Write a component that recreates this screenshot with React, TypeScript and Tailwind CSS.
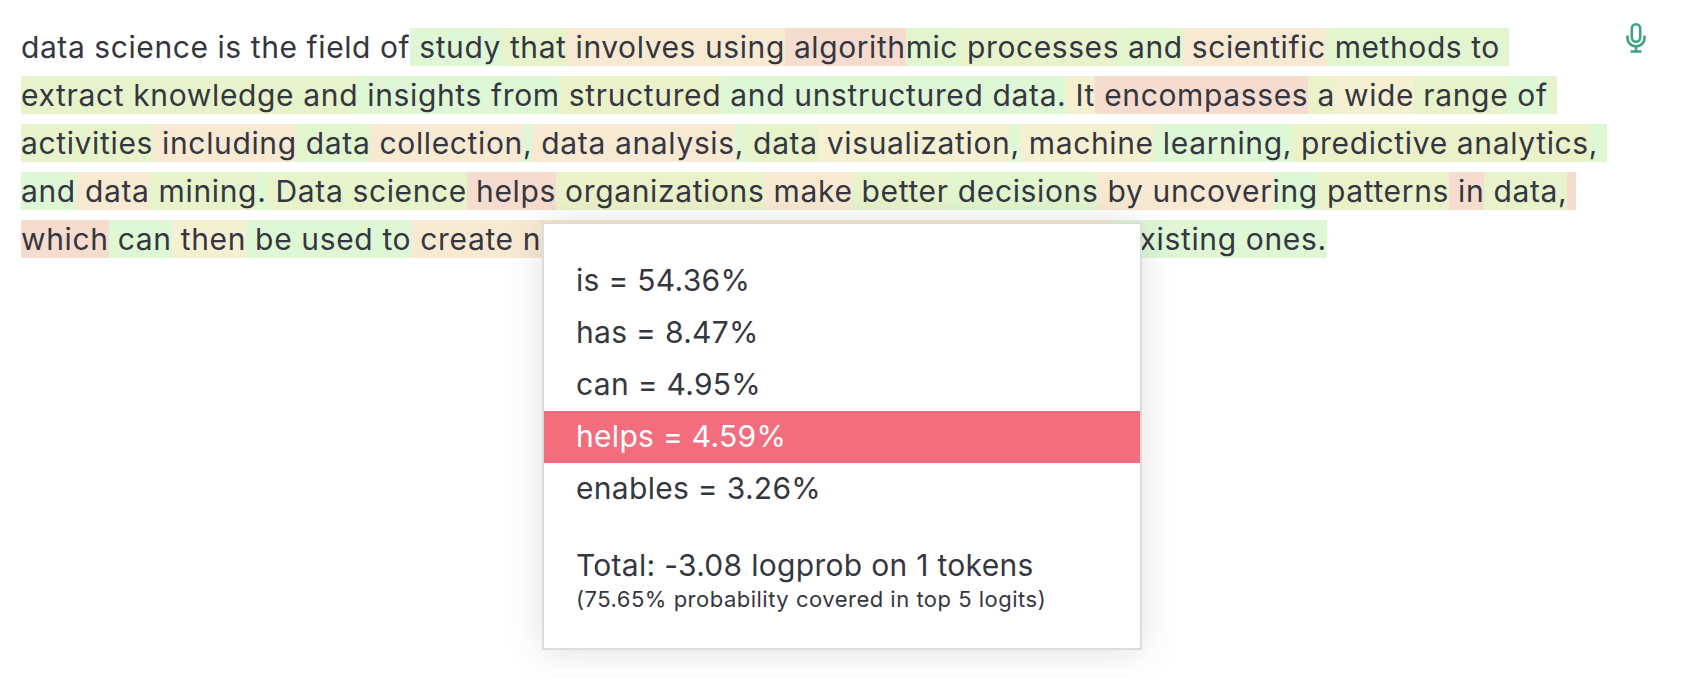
const GREEN = "bg-[#def7d5]";
const LIME = "bg-[#e1f5ce]";
const OLIVE = "bg-[#e6f3cb]";
const KHAKI = "bg-[#ebf2ca]";
const YELLOW = "bg-[#f6f0d2]";
const ORANGE = "bg-[#f8e9d2]";
const RED = "bg-[#f6dccf]";

const lines: [string, string][][] = [
  [
    ["data science is the field of", ""],
    [" study", GREEN],
    [" that", OLIVE],
    [" involves using", ORANGE],
    [" algorith", RED],
    ["mic", LIME],
    [" processes", OLIVE],
    [" and", LIME],
    [" scientific", ORANGE],
    [" methods to ", LIME],
  ],
  [
    ["extract knowledge and", OLIVE],
    [" insights from", GREEN],
    [" structured", KHAKI],
    [" and unstructured data.", GREEN],
    [" It", YELLOW],
    [" encompasses", RED],
    [" a", KHAKI],
    [" wide", YELLOW],
    [" range", OLIVE],
    [" of", GREEN],
    [" ", OLIVE],
  ],
  [
    ["activities", OLIVE],
    [" including", ORANGE],
    [" data", LIME],
    [" collection", ORANGE],
    [",", GREEN],
    [" data analysis", ORANGE],
    [",", GREEN],
    [" data", OLIVE],
    [" visualization", YELLOW],
    [",", GREEN],
    [" machine", YELLOW],
    [" learning,", GREEN],
    [" predictive analytics", KHAKI],
    [", ", GREEN],
  ],
  [
    ["and", GREEN],
    [" data", ORANGE],
    [" mining", OLIVE],
    [".", GREEN],
    [" Data science", OLIVE],
    [" helps", RED],
    [" organizations", KHAKI],
    [" make", ORANGE],
    [" better", OLIVE],
    [" decisions", LIME],
    [" by uncover", ORANGE],
    ["ing", GREEN],
    [" patterns", KHAKI],
    [" in", RED],
    [" data,", OLIVE],
    [" ", RED],
  ],
  [
    ["which", RED],
    [" can", GREEN],
    [" then", YELLOW],
    [" be used to", GREEN],
    [" create new products and services and improve", ORANGE],
    [" existing ones.", GREEN],
  ],
];

const logits = ["is = 54.36%", "has = 8.47%", "can = 4.95%", "helps = 4.59%", "enables = 3.26%"];

function MicIcon() {
  return (
    <svg viewBox="0 0 20 30" fill="none" stroke="#3fa383" strokeWidth="2.6" className="h-[30px] w-[20px] shrink-0">
      <rect x="5.8" y="1.3" width="8.4" height="17.4" rx="4.2" />
      <path d="M1.5 12.5v2.5a8.5 8.5 0 0 0 17 0v-2.5" />
      <path d="M10 23.5v4.5" />
      <path d="M4.5 28.5h11" />
    </svg>
  );
}

export default function App() {
  return (
    <div className="relative h-[678px] w-full overflow-hidden bg-white font-['Inter',sans-serif] text-[#353740]">
      <div className="flex items-start justify-between pl-[21px] pr-[40px] pt-[23px]">
        <div className="text-[30px] leading-[48px] tracking-[0.64px]">
          {lines.map((line, i) => (
            <div key={i} className={i === 0 ? "whitespace-pre tracking-[0.58px]" : "whitespace-pre"}>
              {line.map(([text, color], j) => (
                <span key={j} className={color + " py-[1px]"}>
                  {text}
                </span>
              ))}
            </div>
          ))}
        </div>
        <MicIcon />
      </div>

      <div className="absolute left-[542px] top-[222px] h-[428px] w-[600px] border-2 border-[#dcdcdc] bg-white pt-[31px] text-[30px] tracking-[0.3px] shadow-[0_2px_36px_rgba(0,0,0,0.12)]">
        {logits.map((row) => (
          <div
            key={row}
            className={
              row.startsWith("helps")
                ? "h-[52px] bg-[#f26d7d] pl-[32px] leading-[50px] text-white"
                : "h-[52px] pl-[32px] leading-[50px]"
            }
          >
            {row}
          </div>
        ))}
        <div className="mt-[27px] pl-[32px] leading-[46px]">Total: -3.08 logprob on 1 tokens</div>
        <div className="pl-[32px] text-[22px] leading-[22px] tracking-[0.5px]">(75.65% probability covered in top 5 logits)</div>
      </div>
    </div>
  );
}
